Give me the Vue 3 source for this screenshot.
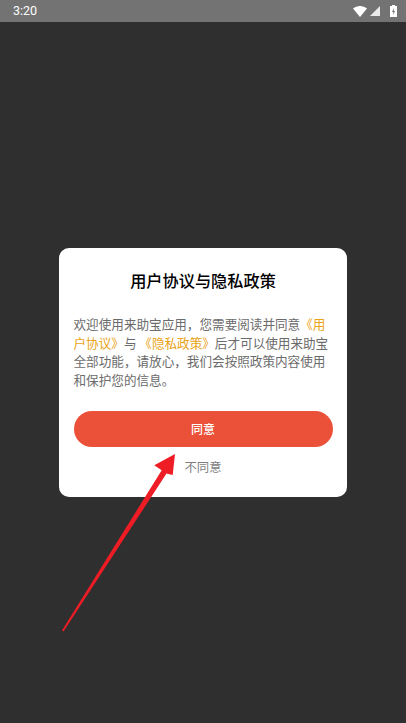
<script setup>
const statusTime = '3:20'
</script>

<template>
  <div class="screen">
    <header class="status">
      <span class="time">{{ statusTime }}</span>
      <div class="icons">
        <svg class="wifi" width="14" height="11" viewBox="0 0 14 11"><path d="M0 2.6C2 1 4.400 0 7 0s5 1 7 2.600L7 11z" fill="#fff" /></svg>
        <svg class="signal" width="10" height="10" viewBox="0 0 10 10"><path d="M10 0v10H0z" fill="#fff" fill-opacity=".85" /></svg>
        <svg class="battery" width="7" height="12" viewBox="0 0 7 12"><path d="M2 0h3v1h2v11H0V1h2z" fill="#fff" /><path d="M4 3 2 7h1.300L3 10l2-4H3.700z" fill="#737373" /></svg>
      </div>
    </header>
    <main class="backdrop">
      <section class="dialog">
        <h1 class="title">用户协议与隐私政策</h1>
        <div class="body">
          <p class="line"><span>欢迎使用来助宝应用，您需要阅读并同意</span><span class="link">《用</span></p>
          <p class="line"><span class="link">户协议》</span><span>与 </span><span class="link">《隐私政策》</span><span>后才可以使用来助宝</span></p>
          <p class="line">全部功能，请放心，我们会按照政策内容使用</p>
          <p class="line">和保护您的信息。</p>
        </div>
        <button class="agree">同意</button>
        <button class="decline">不同意</button>
      </section>
    </main>
    <svg class="arrow" width="406" height="723" viewBox="0 0 406 723">
      <path d="M62 630.500 161.700 470.300 154.300 465.300 175 454 172.700 475 166.500 473.500 63.500 631.500z" fill="#ee1c25" />
    </svg>
  </div>
</template>

<style>
html, body { margin: 0; background: #2f2f2f; }
</style>

<style scoped>
.screen {
  position: relative;
  width: 406px;
  height: 723px;
  overflow: hidden;
  display: flex;
  flex-direction: column;
  background: #2f2f2f;
  font-family: "Noto Sans CJK SC", "Noto Sans", sans-serif;
  text-spacing-trim: space-all;
}
.status {
  height: 22px;
  flex: none;
  background: #737373;
  display: flex;
  align-items: center;
  justify-content: space-between;
  padding: 0 9px 0 13px;
  color: #fff;
}
.time {
  font-family: Roboto, "Liberation Sans", sans-serif;
  font-size: 12.500px;
  line-height: 22px;
  font-weight: 400;
}
.icons { display: flex; align-items: center; gap: 3px; }
.signal { margin-right: 7px; }
.backdrop {
  flex: 1;
  display: flex;
  align-items: center;
  justify-content: center;
}
.dialog {
  width: 288px;
  height: 249px;
  box-sizing: border-box;
  background: #fff;
  border-radius: 10px;
  padding: 21px 14.500px 0;
  display: flex;
  flex-direction: column;
}
.title {
  margin: 0;
  font-size: 16.200px;
  line-height: 22px;
  font-weight: 500;
  color: #000;
  text-align: center;
}
.body {
  margin: 24px 0 0;
  font-size: 12.600px;
  color: #6b6b6b;
  height: 75px;
}
.line {
  margin: 0;
  height: 18.600px;
  line-height: 18.600px;
  white-space: pre;
}
.link { color: #e8a317; }
.agree {
  margin-top: 21px;
  height: 36px;
  flex: none;
  border: 0;
  border-radius: 18px;
  background: #eb5038;
  color: #fff;
  font: 500 12px/36px "Noto Sans CJK SC", sans-serif;
  padding: 0;
}
.decline {
  margin-top: 11px;
  border: 0;
  background: none;
  color: #808080;
  font: 400 12.400px/18px "Noto Sans CJK SC", sans-serif;
  padding: 0;
}
.arrow { position: absolute; inset: 0; pointer-events: none; }
</style>
